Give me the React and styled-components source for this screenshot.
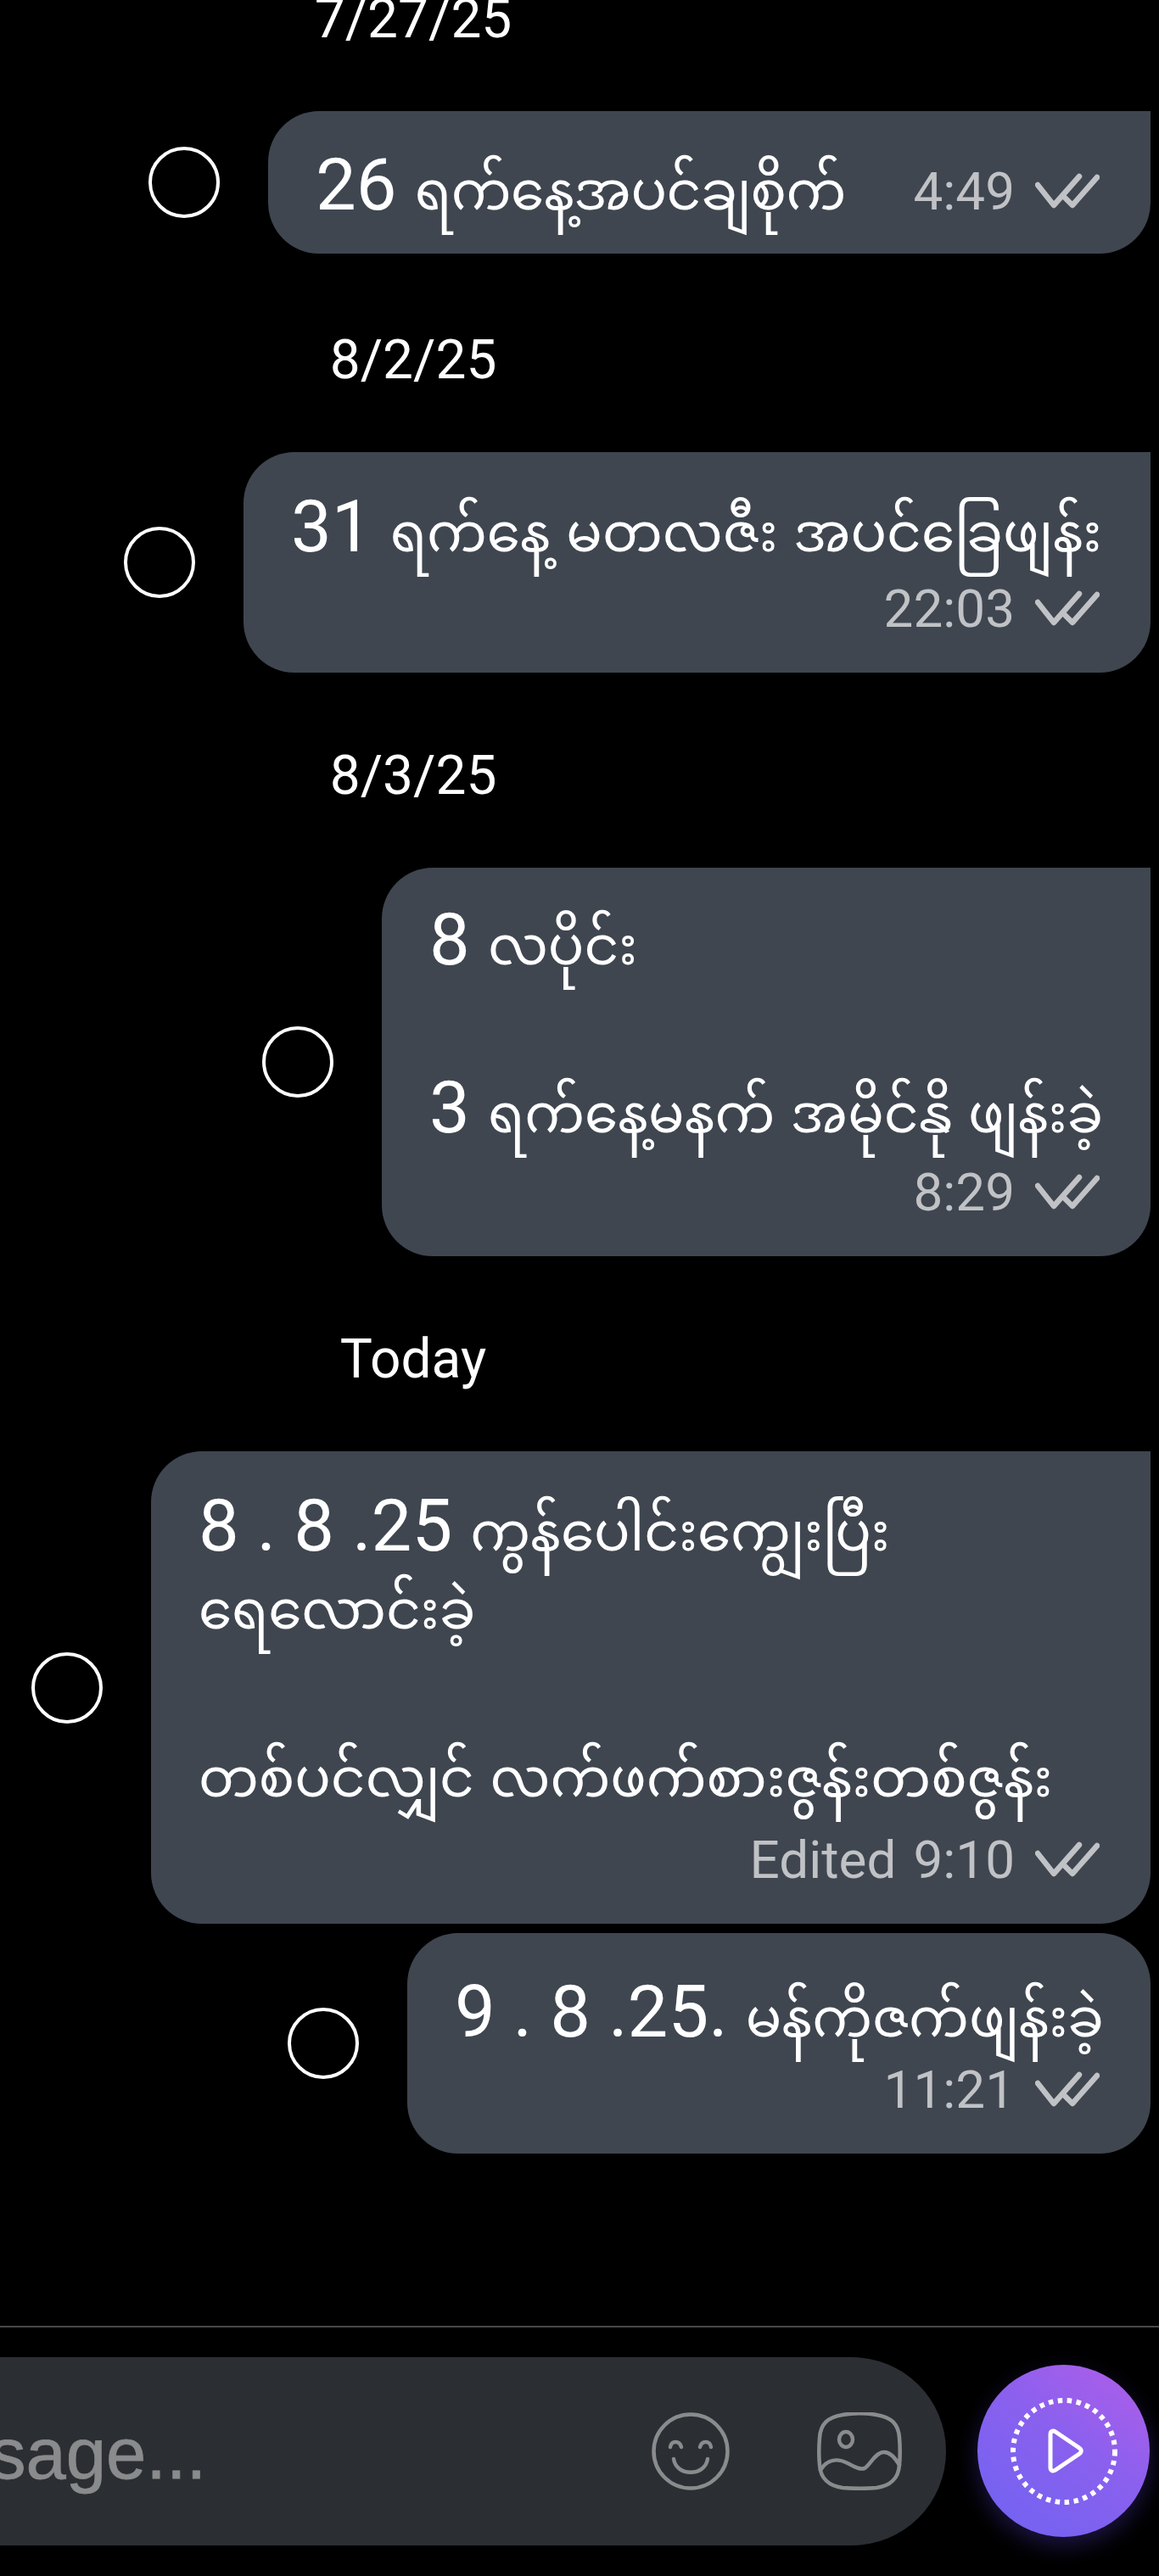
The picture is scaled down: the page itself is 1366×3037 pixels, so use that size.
import React from 'react'
import styled, { createGlobalStyle } from 'styled-components'

const GlobalStyle = createGlobalStyle`
  html, body {
    margin: 0;
    padding: 0;
    background: #000;
  }
  body {
    font-family: Roboto, "Noto Sans Myanmar", "Noto Sans", Padauk, "Myanmar Text", sans-serif;
  }
`

const Page = styled.div`
  box-sizing: border-box;
  width: 1366px;
  height: 3037px;
  overflow: hidden;
  background: #000;
  display: flex;
  flex-direction: column;
`

const DateLabel = styled.div`
  width: 974px;
  height: ${p => p.$height || 84}px;
  margin-top: ${p => p.$top}px;
  line-height: ${p => p.$height || 84}px;
  text-align: center;
  font-size: 64px;
  color: #fff;
`

const Row = styled.div`
  display: flex;
  align-items: center;
  justify-content: flex-end;
  gap: 57px;
  padding-right: 10px;
  margin-top: ${p => p.$top}px;
`

const Radio = styled.span`
  box-sizing: border-box;
  flex: none;
  width: 84px;
  height: 84px;
  border: 4px solid #fff;
  border-radius: 50%;
`

const Bubble = styled.div`
  box-sizing: border-box;
  width: ${p => p.$width}px;
  padding: 39px 60px 30px 56px;
  background: #3f4650;
  border-radius: ${p => (p.$round ? '60px' : '60px 0 60px 60px')};
  overflow: hidden;
`

const InlineBubble = styled(Bubble)`
  display: flex;
  align-items: center;
  justify-content: space-between;
  height: 168px;
  padding-top: 0;
  padding-bottom: 0;
`

const Line = styled.div`
  height: 99px;
  margin-top: ${p => p.$drop || 0}px;
  line-height: 99px;
  font-size: 85px;
  color: #fff;
  white-space: nowrap;
`

const Burmese = styled.span`
  font-size: 63px;
  line-height: 1;
  word-spacing: 3px;
  letter-spacing: ${p => (p.$tight ? '-0.4px' : '0')};
`

const Meta = styled.div`
  display: flex;
  align-items: center;
  justify-content: flex-end;
  gap: 24px;
  height: 92px;
  margin-top: ${p => p.$drop || 0}px;
  font-size: 62px;
  color: #c0c2c6;
  white-space: nowrap;
`

const Edited = styled.span`
  margin-right: -4px;
`

const Composer = styled.div`
  margin-top: ${p => p.$top}px;
  border-top: 2px solid #48484a;
  padding: 35px 11px 0 0;
  display: flex;
  align-items: flex-start;
  gap: 37px;
`

const Field = styled.div`
  flex: 1;
  height: 222px;
  display: flex;
  align-items: center;
  background: #2b2e32;
  border-radius: 0 111px 111px 0;
  padding-right: 52px;
`

const Placeholder = styled.div`
  flex: 1;
  margin-left: -12px;
  padding-top: 6px;
  font-family: "Liberation Sans", Arial, sans-serif;
  font-size: 85px;
  color: #8a8b8d;
  -webkit-text-stroke: 0.8px #8a8b8d;
`

const FieldIcon = styled.svg`
  flex: none;
  margin-left: ${p => p.$left}px;
`

const SendButton = styled.button`
  flex: none;
  width: 203px;
  height: 203px;
  margin-top: 9px;
  padding: 0;
  border: none;
  border-radius: 50%;
  display: flex;
  align-items: center;
  justify-content: center;
  background: linear-gradient(215deg, #b25ee8 0%, #8a60ee 45%, #6f63f2 100%);
  box-shadow: 0 10px 26px rgba(95, 70, 230, 0.3);
`

function Checks() {
    return (
        <svg width="76" height="42" viewBox="0 0 76 42" fill="none" stroke="#c0c2c6" strokeWidth="6.5" strokeLinecap="round" strokeLinejoin="round">
            <path d="M3 14 L22 38 L52 4" />
            <path d="M34 28 L44 38 L73 5" />
        </svg>
    )
}

function Message({ top, width, round, lines, time, edited, metaDrop }) {
    return (
        <Row $top={top}>
            <Radio />
            <Bubble $width={width} $round={round}>
                {lines.map((line, i) => (
                    <Line key={i} $drop={line[2]}>
                        {line[0]} {line[1] && <Burmese>{line[1]}</Burmese>}
                    </Line>
                ))}
                <Meta $drop={metaDrop}>
                    {edited && <Edited>Edited</Edited>}
                    <span>{time}</span>
                    <Checks />
                </Meta>
            </Bubble>
        </Row>
    )
}

function SmileIcon() {
    return (
        <FieldIcon width="92" height="92" viewBox="0 0 92 92" fill="none" stroke="#8a8b8d" strokeWidth="4.5" strokeLinecap="round" $left={0}>
            <circle cx="46" cy="46" r="43.5" />
            <path d="M22 41 C23 33 33 33 35 41" />
            <path d="M57 41 C59 33 69 33 70 41" />
            <path d="M26 55 C29 76 63 76 66 55" />
        </FieldIcon>
    )
}

function PictureIcon() {
    return (
        <FieldIcon width="100" height="92" viewBox="0 0 100 92" fill="none" stroke="#8a8b8d" strokeWidth="4.5" strokeLinecap="round" $left={103}>
            <path d="M30 3 C42 1 58 1 70 3 C88 6 96 14 97 30 C98 42 98 52 97 62 C96 78 86 87 70 89 C58 90 42 90 30 89 C14 87 4 78 3 62 C2 52 2 42 3 30 C4 14 12 6 30 3 Z" />
            <ellipse cx="34" cy="32" rx="8" ry="9" />
            <path d="M4 68 C12 55 24 54 36 60 C44 64 50 68 56 66 C62 63 68 48 78 47 C86 46 92 54 97 62" />
        </FieldIcon>
    )
}

function SendIcon() {
    return (
        <svg width="126" height="126" viewBox="0 0 126 126" fill="none" stroke="#fff" strokeLinejoin="round">
            <circle cx="63" cy="63" r="60" strokeWidth="6" strokeDasharray="5.5 5.5" />
            <path d="M47 43 C47 39 50 38 53 40 L81 59 C84 61 84 64 81 66 L53 85 C50 87 47 86 47 82 Z" strokeWidth="5" />
        </svg>
    )
}

export default function App() {
    return (
        <Page>
            <GlobalStyle />
            <DateLabel $top={0} $height={46}>7/27/25</DateLabel>

            <Row $top={85}>
                <Radio />
                <InlineBubble $width={1040}>
                    <Line $drop={6}>26 <Burmese $tight>ရက်နေ့အပင်ချစိုက်</Burmese></Line>
                    <Meta $drop={20}>
                        <span>4:49</span>
                        <Checks />
                    </Meta>
                </InlineBubble>
            </Row>

            <DateLabel $top={84}>8/2/25</DateLabel>
            <Message
                top={66}
                width={1069}
                lines={[['31', 'ရက်နေ့ မတလဇီး အပင်ခြေဖျန်း']]}
                time="22:03"
            />

            <DateLabel $top={80}>8/3/25</DateLabel>
            <Message
                top={66}
                width={906}
                lines={[['8', 'လပိုင်း', -3], [''], ['3', 'ရက်နေ့မနက် အမိုင်နို ဖျန်းခဲ့']]}
                time="8:29"
                metaDrop={3}
            />

            <DateLabel $top={80}>Today</DateLabel>
            <Message
                top={66}
                width={1178}
                lines={[['8 . 8 .25', 'ကွန်ပေါင်းကျွေးပြီး'], ['', 'ရေလောင်းခဲ့', -7], [''], ['', 'တစ်ပင်လျှင် လက်ဖက်စားဇွန်းတစ်ဇွန်း']]}
                time="9:10"
                edited
                metaDrop={7}
            />
            <Message
                top={11}
                width={876}
                round
                lines={[['9 . 8 .25.', 'မန်ကိုဇက်ဖျန်းခဲ့', 5]]}
                time="11:21"
                metaDrop={-5}
            />

            <Composer $top={203}>
                <Field>
                    <Placeholder>sage...</Placeholder>
                    <SmileIcon />
                    <PictureIcon />
                </Field>
                <SendButton>
                    <SendIcon />
                </SendButton>
            </Composer>
        </Page>
    )
}
